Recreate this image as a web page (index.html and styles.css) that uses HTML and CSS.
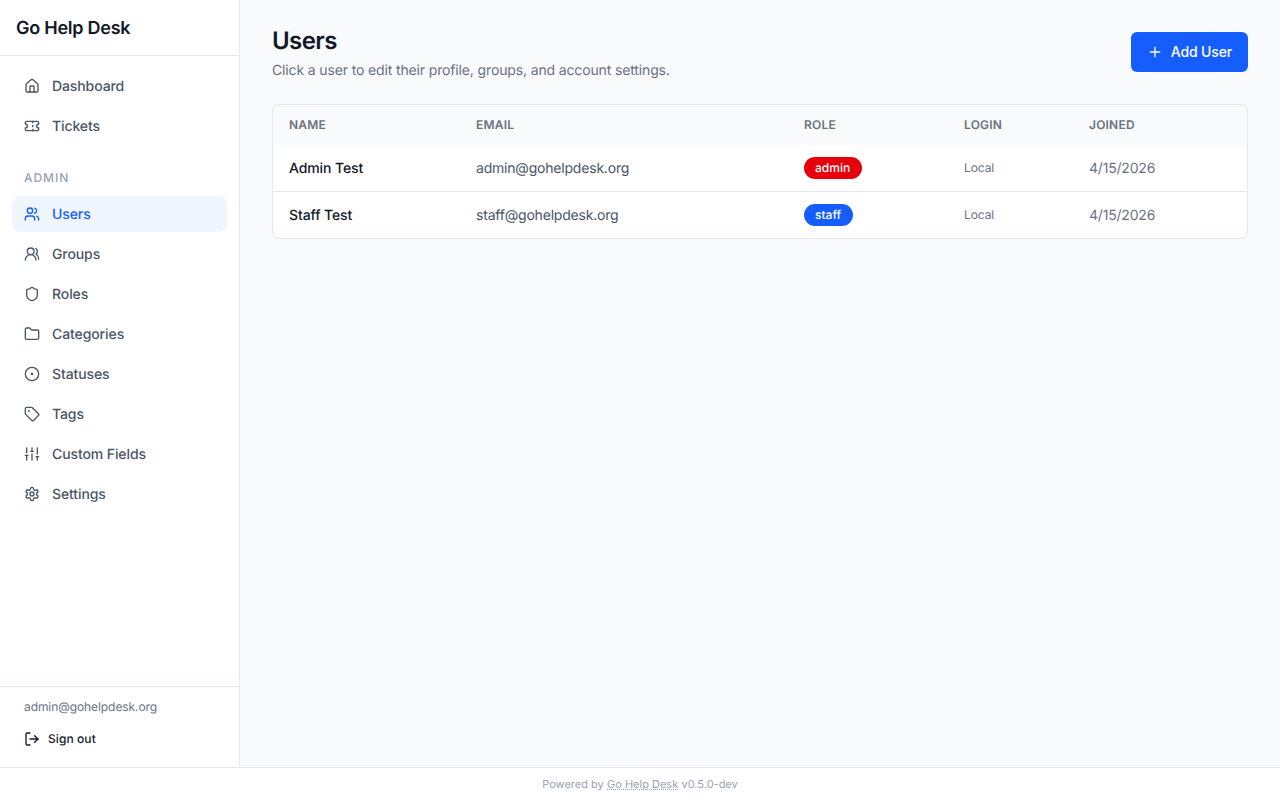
FILE: index.html
```html
<!DOCTYPE html>
<html lang="en">
<head>
    <meta charset="UTF-8">
    <meta name="viewport" content="width=device-width, initial-scale=1.0">
    <title>Users - Go Help Desk</title>
    <link rel="stylesheet" href="styles.css">
</head>
<body>
    <div class="app">
        <aside class="sidebar">
            <div class="brand">Go Help Desk</div>
            <nav class="nav">
                <a class="nav-item" href="#">
                    <svg class="icon" viewBox="0 0 24 24"><path d="M15 21v-8a1 1 0 0 0-1-1h-4a1 1 0 0 0-1 1v8"/><path d="M3 10a2 2 0 0 1 .709-1.528l7-5.999a2 2 0 0 1 2.582 0l7 5.999A2 2 0 0 1 21 10v9a2 2 0 0 1-2 2H5a2 2 0 0 1-2-2z"/></svg>
                    Dashboard
                </a>
                <a class="nav-item" href="#">
                    <svg class="icon" viewBox="0 0 24 24"><path d="M2 9a3 3 0 0 1 0 6v2a2 2 0 0 0 2 2h16a2 2 0 0 0 2-2v-2a3 3 0 0 1 0-6V7a2 2 0 0 0-2-2H4a2 2 0 0 0-2 2Z"/><path d="M13 5v2"/><path d="M13 17v2"/><path d="M13 11v2"/></svg>
                    Tickets
                </a>
                <div class="nav-label">Admin</div>
                <a class="nav-item active" href="#">
                    <svg class="icon" viewBox="0 0 24 24"><path d="M16 21v-2a4 4 0 0 0-4-4H6a4 4 0 0 0-4 4v2"/><circle cx="9" cy="7" r="4"/><path d="M22 21v-2a4 4 0 0 0-3-3.87"/><path d="M16 3.13a4 4 0 0 1 0 7.75"/></svg>
                    Users
                </a>
                <a class="nav-item" href="#">
                    <svg class="icon" viewBox="0 0 24 24"><path d="M18 21a8 8 0 0 0-16 0"/><circle cx="10" cy="8" r="5"/><path d="M22 20c0-3.37-2-6.5-4-8a5 5 0 0 0-.45-8.3"/></svg>
                    Groups
                </a>
                <a class="nav-item" href="#">
                    <svg class="icon" viewBox="0 0 24 24"><path d="M20 13c0 5-3.5 7.5-7.66 8.95a1 1 0 0 1-.67-.01C7.5 20.5 4 18 4 13V6a1 1 0 0 1 1-1c2 0 4.5-1.2 6.24-2.72a1.17 1.17 0 0 1 1.52 0C14.51 3.81 17 5 19 5a1 1 0 0 1 1 1z"/></svg>
                    Roles
                </a>
                <a class="nav-item" href="#">
                    <svg class="icon" viewBox="0 0 24 24"><path d="M20 20a2 2 0 0 0 2-2V8a2 2 0 0 0-2-2h-7.9a2 2 0 0 1-1.69-.9L9.6 3.9A2 2 0 0 0 7.93 3H4a2 2 0 0 0-2 2v13a2 2 0 0 0 2 2Z"/></svg>
                    Categories
                </a>
                <a class="nav-item" href="#">
                    <svg class="icon" viewBox="0 0 24 24"><circle cx="12" cy="12" r="10"/><circle cx="12" cy="12" r="1"/></svg>
                    Statuses
                </a>
                <a class="nav-item" href="#">
                    <svg class="icon" viewBox="0 0 24 24"><path d="M12.586 2.586A2 2 0 0 0 11.172 2H4a2 2 0 0 0-2 2v7.172a2 2 0 0 0 .586 1.414l8.704 8.704a2.426 2.426 0 0 0 3.42 0l6.58-6.58a2.426 2.426 0 0 0 0-3.42z"/><circle cx="7.5" cy="7.5" r=".5"/></svg>
                    Tags
                </a>
                <a class="nav-item" href="#">
                    <svg class="icon" viewBox="0 0 24 24"><path d="M4 21v-7"/><path d="M4 10V3"/><path d="M12 21v-9"/><path d="M12 8V3"/><path d="M20 21v-5"/><path d="M20 12V3"/><path d="M2 14h4"/><path d="M10 8h4"/><path d="M18 16h4"/></svg>
                    Custom Fields
                </a>
                <a class="nav-item" href="#">
                    <svg class="icon" viewBox="0 0 24 24"><path d="M12.22 2h-.44a2 2 0 0 0-2 2v.18a2 2 0 0 1-1 1.73l-.43.25a2 2 0 0 1-2 0l-.15-.08a2 2 0 0 0-2.73.73l-.22.38a2 2 0 0 0 .73 2.73l.15.1a2 2 0 0 1 1 1.72v.51a2 2 0 0 1-1 1.74l-.15.09a2 2 0 0 0-.73 2.73l.22.38a2 2 0 0 0 2.73.73l.15-.08a2 2 0 0 1 2 0l.43.25a2 2 0 0 1 1 1.73V20a2 2 0 0 0 2 2h.44a2 2 0 0 0 2-2v-.18a2 2 0 0 1 1-1.73l.43-.25a2 2 0 0 1 2 0l.15.08a2 2 0 0 0 2.73-.73l.22-.39a2 2 0 0 0-.73-2.73l-.15-.08a2 2 0 0 1-1-1.74v-.5a2 2 0 0 1 1-1.74l.15-.09a2 2 0 0 0 .73-2.73l-.22-.38a2 2 0 0 0-2.73-.73l-.15.08a2 2 0 0 1-2 0l-.43-.25a2 2 0 0 1-1-1.73V4a2 2 0 0 0-2-2z"/><circle cx="12" cy="12" r="3"/></svg>
                    Settings
                </a>
            </nav>
            <div class="account">
                <div class="account-email">admin@gohelpdesk.org</div>
                <a class="sign-out" href="#">
                    <svg class="icon" viewBox="0 0 24 24"><path d="m16 17 5-5-5-5"/><path d="M21 12H9"/><path d="M9 21H5a2 2 0 0 1-2-2V5a2 2 0 0 1 2-2h4"/></svg>
                    Sign out
                </a>
            </div>
        </aside>

        <main class="main">
            <div class="page-header">
                <div>
                    <h1 class="page-title">Users</h1>
                    <p class="page-subtitle">Click a user to edit their profile, groups, and account settings.</p>
                </div>
                <button class="btn-primary" type="button">
                    <svg class="icon" viewBox="0 0 24 24"><path d="M5 12h14"/><path d="M12 5v14"/></svg>
                    <span class="btn-label">Add User</span>
                </button>
            </div>

            <div class="table-card">
                <table class="users-table">
                    <colgroup>
                        <col class="col-name">
                        <col class="col-email">
                        <col class="col-role">
                        <col class="col-login">
                        <col>
                    </colgroup>
                    <thead>
                        <tr>
                            <th>Name</th>
                            <th>Email</th>
                            <th>Role</th>
                            <th>Login</th>
                            <th>Joined</th>
                        </tr>
                    </thead>
                    <tbody>
                        <tr>
                            <td class="cell-name">Admin Test</td>
                            <td class="cell-email">admin@gohelpdesk.org</td>
                            <td><span class="badge badge-admin">admin</span></td>
                            <td class="cell-login">Local</td>
                            <td class="cell-date">4/15/2026</td>
                        </tr>
                        <tr>
                            <td class="cell-name">Staff Test</td>
                            <td class="cell-email">staff@gohelpdesk.org</td>
                            <td><span class="badge badge-staff">staff</span></td>
                            <td class="cell-login">Local</td>
                            <td class="cell-date">4/15/2026</td>
                        </tr>
                    </tbody>
                </table>
            </div>
        </main>
    </div>

    <footer class="footer">
        Powered by <a href="#">Go Help Desk</a> v0.5.0-dev
    </footer>
</body>
</html>
```

FILE: styles.css
```css
* {
    box-sizing: border-box;
}
body {
    font-family: Inter, "Liberation Sans", sans-serif;
    text-rendering: geometricPrecision;
    background-color: #f9fafc;
    color: #101828;
    margin: 0;
    height: 100vh;
    display: flex;
    flex-direction: column;
    overflow: hidden;
}
a {
    color: inherit;
    text-decoration: none;
}
.icon {
    width: 16px;
    height: 16px;
    flex: none;
    fill: none;
    stroke: currentColor;
    stroke-width: 2;
    stroke-linecap: round;
    stroke-linejoin: round;
}
.app {
    flex: 1;
    display: flex;
    min-height: 0;
}
.sidebar {
    width: 240px;
    flex: none;
    background-color: #fff;
    border-right: 1px solid #e2e8f0;
    display: flex;
    flex-direction: column;
}
.brand {
    height: 56px;
    padding: 2px 16px 0;
    display: flex;
    align-items: center;
    font-size: 18px;
    font-weight: 600;
    letter-spacing: -0.25px;
    color: #101828;
    border-bottom: 1px solid #e2e8f0;
}
.nav {
    flex: 1;
    padding: 12px;
    display: flex;
    flex-direction: column;
    gap: 4px;
}
.nav-item {
    height: 36px;
    padding: 0 12px;
    display: flex;
    align-items: center;
    gap: 12px;
    font-size: 14px;
    font-weight: 500;
    letter-spacing: -0.1px;
    color: #4a5565;
    border-radius: 8px;
}
.nav-item.active {
    background-color: #eff6ff;
    color: #155dfc;
}
.nav-label {
    padding: 0 12px;
    margin-top: 22px;
    margin-bottom: 6px;
    font-size: 12px;
    line-height: 16px;
    font-weight: 500;
    letter-spacing: 0.96px;
    text-transform: uppercase;
    color: #99a1af;
}
.account {
    height: 81px;
    padding: 12px 24px;
    border-top: 1px solid #e2e8f0;
}
.account-email {
    font-size: 12px;
    line-height: 16px;
    letter-spacing: -0.08px;
    color: #6a7282;
}
.sign-out {
    margin-top: 16px;
    display: flex;
    align-items: center;
    gap: 8px;
    font-size: 12px;
    line-height: 16px;
    font-weight: 500;
    letter-spacing: 0.08px;
    color: #101828;
}
.main {
    flex: 1;
    padding: 32px 32px 0;
    min-width: 0;
}
.page-header {
    display: flex;
    justify-content: space-between;
    align-items: flex-start;
    margin-bottom: 23px;
}
.page-title {
    margin: 0;
    font-size: 24px;
    line-height: 18px;
    font-weight: 600;
    letter-spacing: -0.6px;
    color: #101828;
}
.page-subtitle {
    margin: 11px 0 0;
    font-size: 14px;
    line-height: 20px;
    letter-spacing: -0.14px;
    color: #6a7282;
}
.btn-primary {
    height: 40px;
    padding: 0 16px;
    display: flex;
    align-items: center;
    gap: 8px;
    border: none;
    border-radius: 6px;
    background-color: #155dfc;
    color: #fff;
    font-family: inherit;
    font-size: 14px;
    font-weight: 500;
    letter-spacing: -0.15px;
    cursor: pointer;
}
.btn-label {
    position: relative;
    top: -1px;
}
.table-card {
    background-color: #fff;
    border: 1px solid #e2e8f0;
    border-radius: 8px;
    overflow: hidden;
}
.users-table {
    width: 100%;
    table-layout: fixed;
    border-collapse: collapse;
}
.col-name {
    width: 187px;
}
.col-email {
    width: 328px;
}
.col-role {
    width: 160px;
}
.col-login {
    width: 125px;
}
.users-table th {
    height: 40px;
    padding: 0 16px 2px;
    text-align: left;
    background-color: #f9fafc;
    font-size: 12px;
    font-weight: 600;
    letter-spacing: 0.2px;
    text-transform: uppercase;
    color: #6a7282;
}
.users-table td {
    height: 46px;
    padding: 0 16px;
    font-size: 14px;
    color: #4a5565;
}
.users-table tbody tr + tr td {
    height: 47px;
    border-top: 1px solid #e2e8f0;
}
.users-table .cell-name,
.users-table .cell-email,
.users-table .cell-date {
    padding-top: 2px;
    letter-spacing: -0.2px;
}
.users-table .cell-name {
    font-weight: 500;
    letter-spacing: -0.1px;
    color: #101828;
}
.users-table .cell-login {
    font-size: 12px;
    letter-spacing: -0.1px;
    color: #6a7282;
}
.users-table .cell-date {
    color: #6a7282;
}
.badge {
    display: inline-block;
    padding: 0 12px 0 11px;
    height: 22px;
    line-height: 22px;
    border-radius: 11px;
    font-size: 12px;
    font-weight: 500;
    color: #fff;
    vertical-align: middle;
}
.badge-admin {
    background-color: #e7000b;
}
.badge-staff {
    background-color: #155dfc;
}
.footer {
    height: 33px;
    flex: none;
    background-color: #fff;
    border-top: 1px solid #e2e8f0;
    display: flex;
    align-items: center;
    justify-content: center;
    gap: 0.3em;
    font-size: 11px;
    color: #99a1af;
}
.footer a {
    text-decoration: underline dotted;
}
```
